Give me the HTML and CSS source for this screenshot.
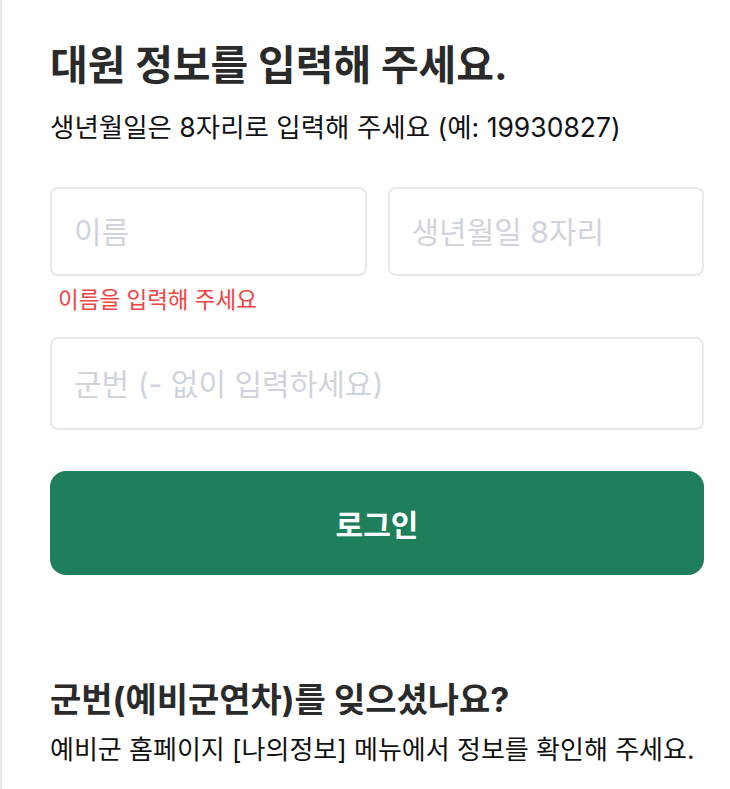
FILE: index.html
```html
<!DOCTYPE html>
<html lang="ko">
<head>
  <meta charset="UTF-8">
  <title>대원 정보 입력</title>
  <link rel="stylesheet" href="styles.css">
</head>
<body>
  <div class="page">
    <h2 class="title">대원 정보를 입력해 주세요.</h2>
    <p class="sub">생년월일은 8자리로 입력해 주세요 (예: 19930827)</p>

    <div class="row">
      <div class="field">
        <input type="text" placeholder="이름">
        <div class="error">이름을 입력해 주세요</div>
      </div>
      <div class="field">
        <input type="text" placeholder="생년월일 8자리">
      </div>
    </div>

    <input type="text" class="wide" placeholder="군번 (- 없이 입력하세요)">

    <button class="login">로그인</button>

    <h3 class="help-title">군번(예비군연차)를 잊으셨나요?</h3>
    <p class="help">예비군 홈페이지 [나의정보] 메뉴에서 정보를 확인해 주세요.</p>
  </div>
</body>
</html>
```

FILE: styles.css
```css
body { margin: 0; background: #fff; color: #222; font-family: Inter, "Noto Sans CJK KR", sans-serif; }
.page { border-left: 2px solid #e6e6e6; padding: 40px 26px 30px 48px; min-height: 789px; box-sizing: border-box; }
.title { margin: 0; font-size: 41px; font-weight: 700; color: #2a2a2a; line-height: 50px; }
.sub { margin: 19px 0 0; font-size: 26.5px; color: #111; line-height: 36px; }
.row { display: flex; gap: 21px; margin-top: 42px; }
.field { flex: 1; }
input { display: block; width: 100%; box-sizing: border-box; height: 89px; padding: 0 22px; border: 2px solid #e8e8e8; border-radius: 8px; font-family: inherit; font-size: 30px; color: #222; outline: none; }
input::placeholder { color: #cfd4dc; }
.error { margin: 9px 0 0 8px; font-size: 22.5px; color: #ef4444; line-height: 30px; }
.wide { margin-top: 22px; height: 93px; }
.login { display: block; width: 100%; height: 104px; margin-top: 41px; border: none; border-radius: 16px; background: #1e7f5a; color: #fff; font-family: inherit; font-size: 30px; font-weight: 700; cursor: pointer; }
.help-title { margin: 103px 0 0; font-size: 34px; font-weight: 700; color: #2a2a2a; line-height: 44px; }
.help { margin: 11px 0 0; font-size: 26px; color: #111; line-height: 34px; }
```
